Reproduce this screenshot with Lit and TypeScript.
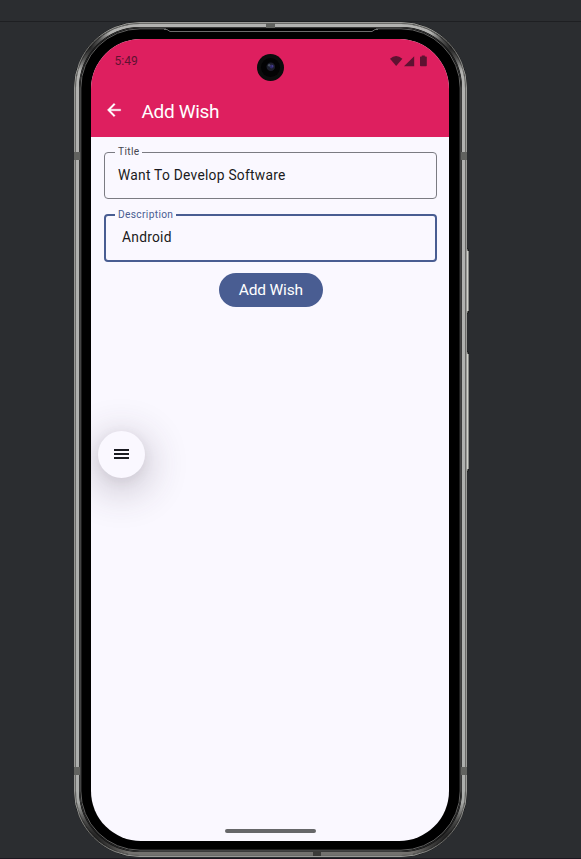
import { LitElement, html, css, svg } from "lit";
import { customElement, property } from "lit/decorators.js";

@customElement("device-frame")
class DeviceFrame extends LitElement {
  static styles = css`
    :host { display: block; position: absolute; inset: 0; pointer-events: none; }
    svg { display: block; width: 100%; height: 100%; }
  `;
  // One concentric outline of the metal band, inset from the outer edge.
  private ring(inset: number, color: string, width: number) {
    return svg`<rect x=${inset} y=${inset} width=${393 - inset * 2} height=${835 - inset * 2}
      rx=${66 - inset} fill="none" stroke=${color} stroke-width=${width} />`;
  }
  render() {
    return html`<svg viewBox="0 0 396 837">
      <defs>
        <linearGradient id="metal" x1="0" y1="0" x2="0" y2="1">
          <stop offset="0" stop-color="#b2b2b0" />
          <stop offset="0.93" stop-color="#acaeac" />
          <stop offset="1" stop-color="#73716e" />
        </linearGradient>
        <radialGradient id="shade">
          <stop offset="0" stop-color="#151515" stop-opacity="0.9" />
          <stop offset="0.5" stop-color="#181818" stop-opacity="0.6" />
          <stop offset="1" stop-color="#181818" stop-opacity="0" />
        </radialGradient>
        <clipPath id="outline"><rect width="393" height="835" rx="66" /></clipPath>
      </defs>
      ${[[226, 66], [329, 121]].map(
        ([y, h]) => svg`<rect x="391.5" y=${y + 0.5} width="3" height=${h - 1} rx="1.5" fill="#777874" stroke="#1b1c1d" />
          <rect x="393" y=${y + 3} width="1.6" height=${h - 6} fill="#cfd0ca" />`
      )}
      <rect width="393" height="835" rx="66" fill="#000" />
      ${this.ring(0.5, "#8f908d", 1)}
      ${this.ring(1.5, "#6a6a68", 1)}
      ${this.ring(3.5, "url(#metal)", 3)}
      ${this.ring(5.5, "#3a3a3a", 1)}
      <g clip-path="url(#outline)">
        <circle cx="16" cy="26" r="25" fill="url(#shade)" />
        <circle cx="377" cy="26" r="25" fill="url(#shade)" />
        <circle cx="20" cy="816" r="38" fill="url(#shade)" />
        <circle cx="373" cy="816" r="38" fill="url(#shade)" />
      </g>
      <rect x="6.5" y="6.5" width="380" height="822" rx="59.5" fill="#000" />
      ${this.ring(6.8, "#626261", 1)}
      ${this.ring(0.5, "#a0a09c", 0.6)}
      <rect x="92" y="6.2" width="210" height="2.2" fill="#000" />
      <path d="M90 7.5H93L96 9.5H298L301 7.5H304" fill="none" stroke="#777" stroke-width="0.9" />
      <g fill="#61625f">
        <rect x="192" y="1" width="9" height="5" />
        <rect x="0" y="130" width="6" height="8" />
        <rect x="387" y="130" width="6" height="8" />
        <rect x="0" y="745" width="6" height="8" />
        <rect x="387" y="745" width="6" height="8" />
        <rect x="239" y="829" width="8" height="5" fill="#3c3b39" />
      </g>
    </svg>`;
  }
}

@customElement("outlined-field")
class OutlinedField extends LitElement {
  @property() label = "";
  @property() value = "";
  @property({ type: Boolean, reflect: true }) active = false;
  static styles = css`
    :host { display: block; }
    fieldset {
      box-sizing: border-box; height: 53px; margin: 0; min-width: 0;
      padding: 0 0 0 13px; border: 1px solid #7b7b82; border-radius: 4px;
      color: #1a1b21;
    }
    legend {
      margin-left: -3px; padding: 0 3px; font-size: 10.2px; line-height: 12px; height: 12px;
      letter-spacing: 0.34px; color: #45464f;
    }
    .value { font-size: 13.8px; line-height: 18px; letter-spacing: 0.26px; padding-top: 8px; white-space: pre; }
    :host([active]) fieldset { border: 2px solid #495d92; padding-left: 12px; }
    :host([active]) legend { color: #495d92; }
    :host([active]) .value { padding-left: 4px; padding-top: 7.5px; }
  `;
  render() {
    return html`<fieldset><legend>${this.label}</legend><div class="value">${this.value}</div></fieldset>`;
  }
}

@customElement("app-root")
class AppRoot extends LitElement {
  static styles = css`
    :host {
      display: block; box-sizing: border-box; height: 859px; overflow: hidden;
      background: #2b2d30; font-family: Roboto, sans-serif; position: relative;
      padding: 21px 0 0; border-bottom: 1px solid #1c1820;
    }
    .divider { height: 1px; background: #1e1f22; }
    .device { position: relative; width: 396px; height: 837px; margin-left: 74px; }
    .screen {
      position: relative; box-sizing: border-box; width: 375.5px; height: 819px;
      padding: 17px 0 0 17px;
    }
    .display {
      position: relative; display: flex; flex-direction: column; width: 358.4px; height: 802px;
      border-radius: 50px; overflow: hidden; background: #faf8ff;
    }
    .top { height: 98px; background: #de1f5f; }
    .status {
      display: flex; justify-content: space-between; align-items: center; height: 44px;
      padding: 0 21.4px 0 23.5px; color: #5e1231; font-size: 12px;
    }
    .status svg { width: 38px; height: 12px; }
    .bar { display: flex; align-items: center; height: 56px; padding-left: 13px; color: #fff; }
    .bar svg { width: 20px; height: 20px; margin-top: -3px; }
    .title { margin-left: 17.5px; font-size: 19px; letter-spacing: -0.32px; }
    .form { display: flex; flex-direction: column; padding: 9px 12.4px 0 13px; }
    .form outlined-field + outlined-field { margin-top: 9.5px; }
    .submit {
      align-self: center; margin: 11px 0 0 0.6px; width: 104px; height: 34px; border: 0; padding: 0;
      border-radius: 17px; background: #495d92; color: #fff; font: 15.5px Roboto, sans-serif;
      letter-spacing: -0.18px;
    }
    .camera {
      position: absolute; left: 166px; top: 14.5px; width: 27px; height: 27px;
    }
    .menu {
      position: absolute; left: 7px; top: 392px; width: 47px; height: 47px; border-radius: 50%;
      background: #faf8ff; display: flex; align-items: center; justify-content: center;
      box-shadow: 0 9px 38px 6px #3a2f443d, 0 3px 12px #3a2f4414;
    }
    .lines { width: 15px; height: 10px; margin-top: -1px; display: flex; flex-direction: column; justify-content: space-between; }
    .lines i { height: 1.7px; background: #1a1b21; }
    .home { width: 91px; height: 4px; border-radius: 2px; background: #666769; margin: auto auto 8px; }
  `;
  render() {
    return html`
      <div class="divider"></div>
      <div class="device">
        <device-frame></device-frame>
        <div class="screen">
          <div class="display">
            <div class="top">
              <div class="status">
                <span>5:49</span>
                <svg viewBox="0 0 38 12" fill="#5e1231">
                  <path d="M0 3.7Q6-1.9 12.4 3.7L6.2 11Z" />
                  <path d="M14 11.3H24.2V1.2Z" />
                  <path d="M30 2.1Q30 1.4 30.8 1.4H31.8V0.4H34.8V1.4H36Q36.8 1.4 36.8 2.1V10.6Q36.8 11.3 36 11.3H30.8Q30 11.3 30 10.6Z" />
                </svg>
              </div>
              <div class="bar">
                <svg viewBox="0 0 24 24" fill="#fff" stroke="#fff" stroke-width="0.4"><path d="M20 11H7.83l5.59-5.59L12 4l-8 8 8 8 1.41-1.41L7.83 13H20v-2z" /></svg>
                <span class="title">Add Wish</span>
              </div>
            </div>
            <div class="form">
              <outlined-field label="Title" value="Want To Develop Software"></outlined-field>
              <outlined-field label="Description" value="Android" active></outlined-field>
              <button class="submit">Add Wish</button>
            </div>
            <div class="home"></div>
            <div class="menu"><div class="lines"><i></i><i></i><i></i></div></div>
            <svg class="camera" viewBox="0 0 27 27">
              <circle cx="13.5" cy="13.5" r="13.5" fill="#0b0c0c" />
              <circle cx="13.5" cy="13.5" r="9.5" fill="#030304" />
              <circle cx="13.8" cy="12.8" r="4.3" fill="#1c1d2b" />
              <circle cx="14.6" cy="12.6" r="2" fill="#302a68" />
              <circle cx="12.2" cy="11.3" r="1.2" fill="#4a5061" />
              <circle cx="15.5" cy="12" r="0.8" fill="#5145a0" />
            </svg>
          </div>
        </div>
      </div>
    `;
  }
}
